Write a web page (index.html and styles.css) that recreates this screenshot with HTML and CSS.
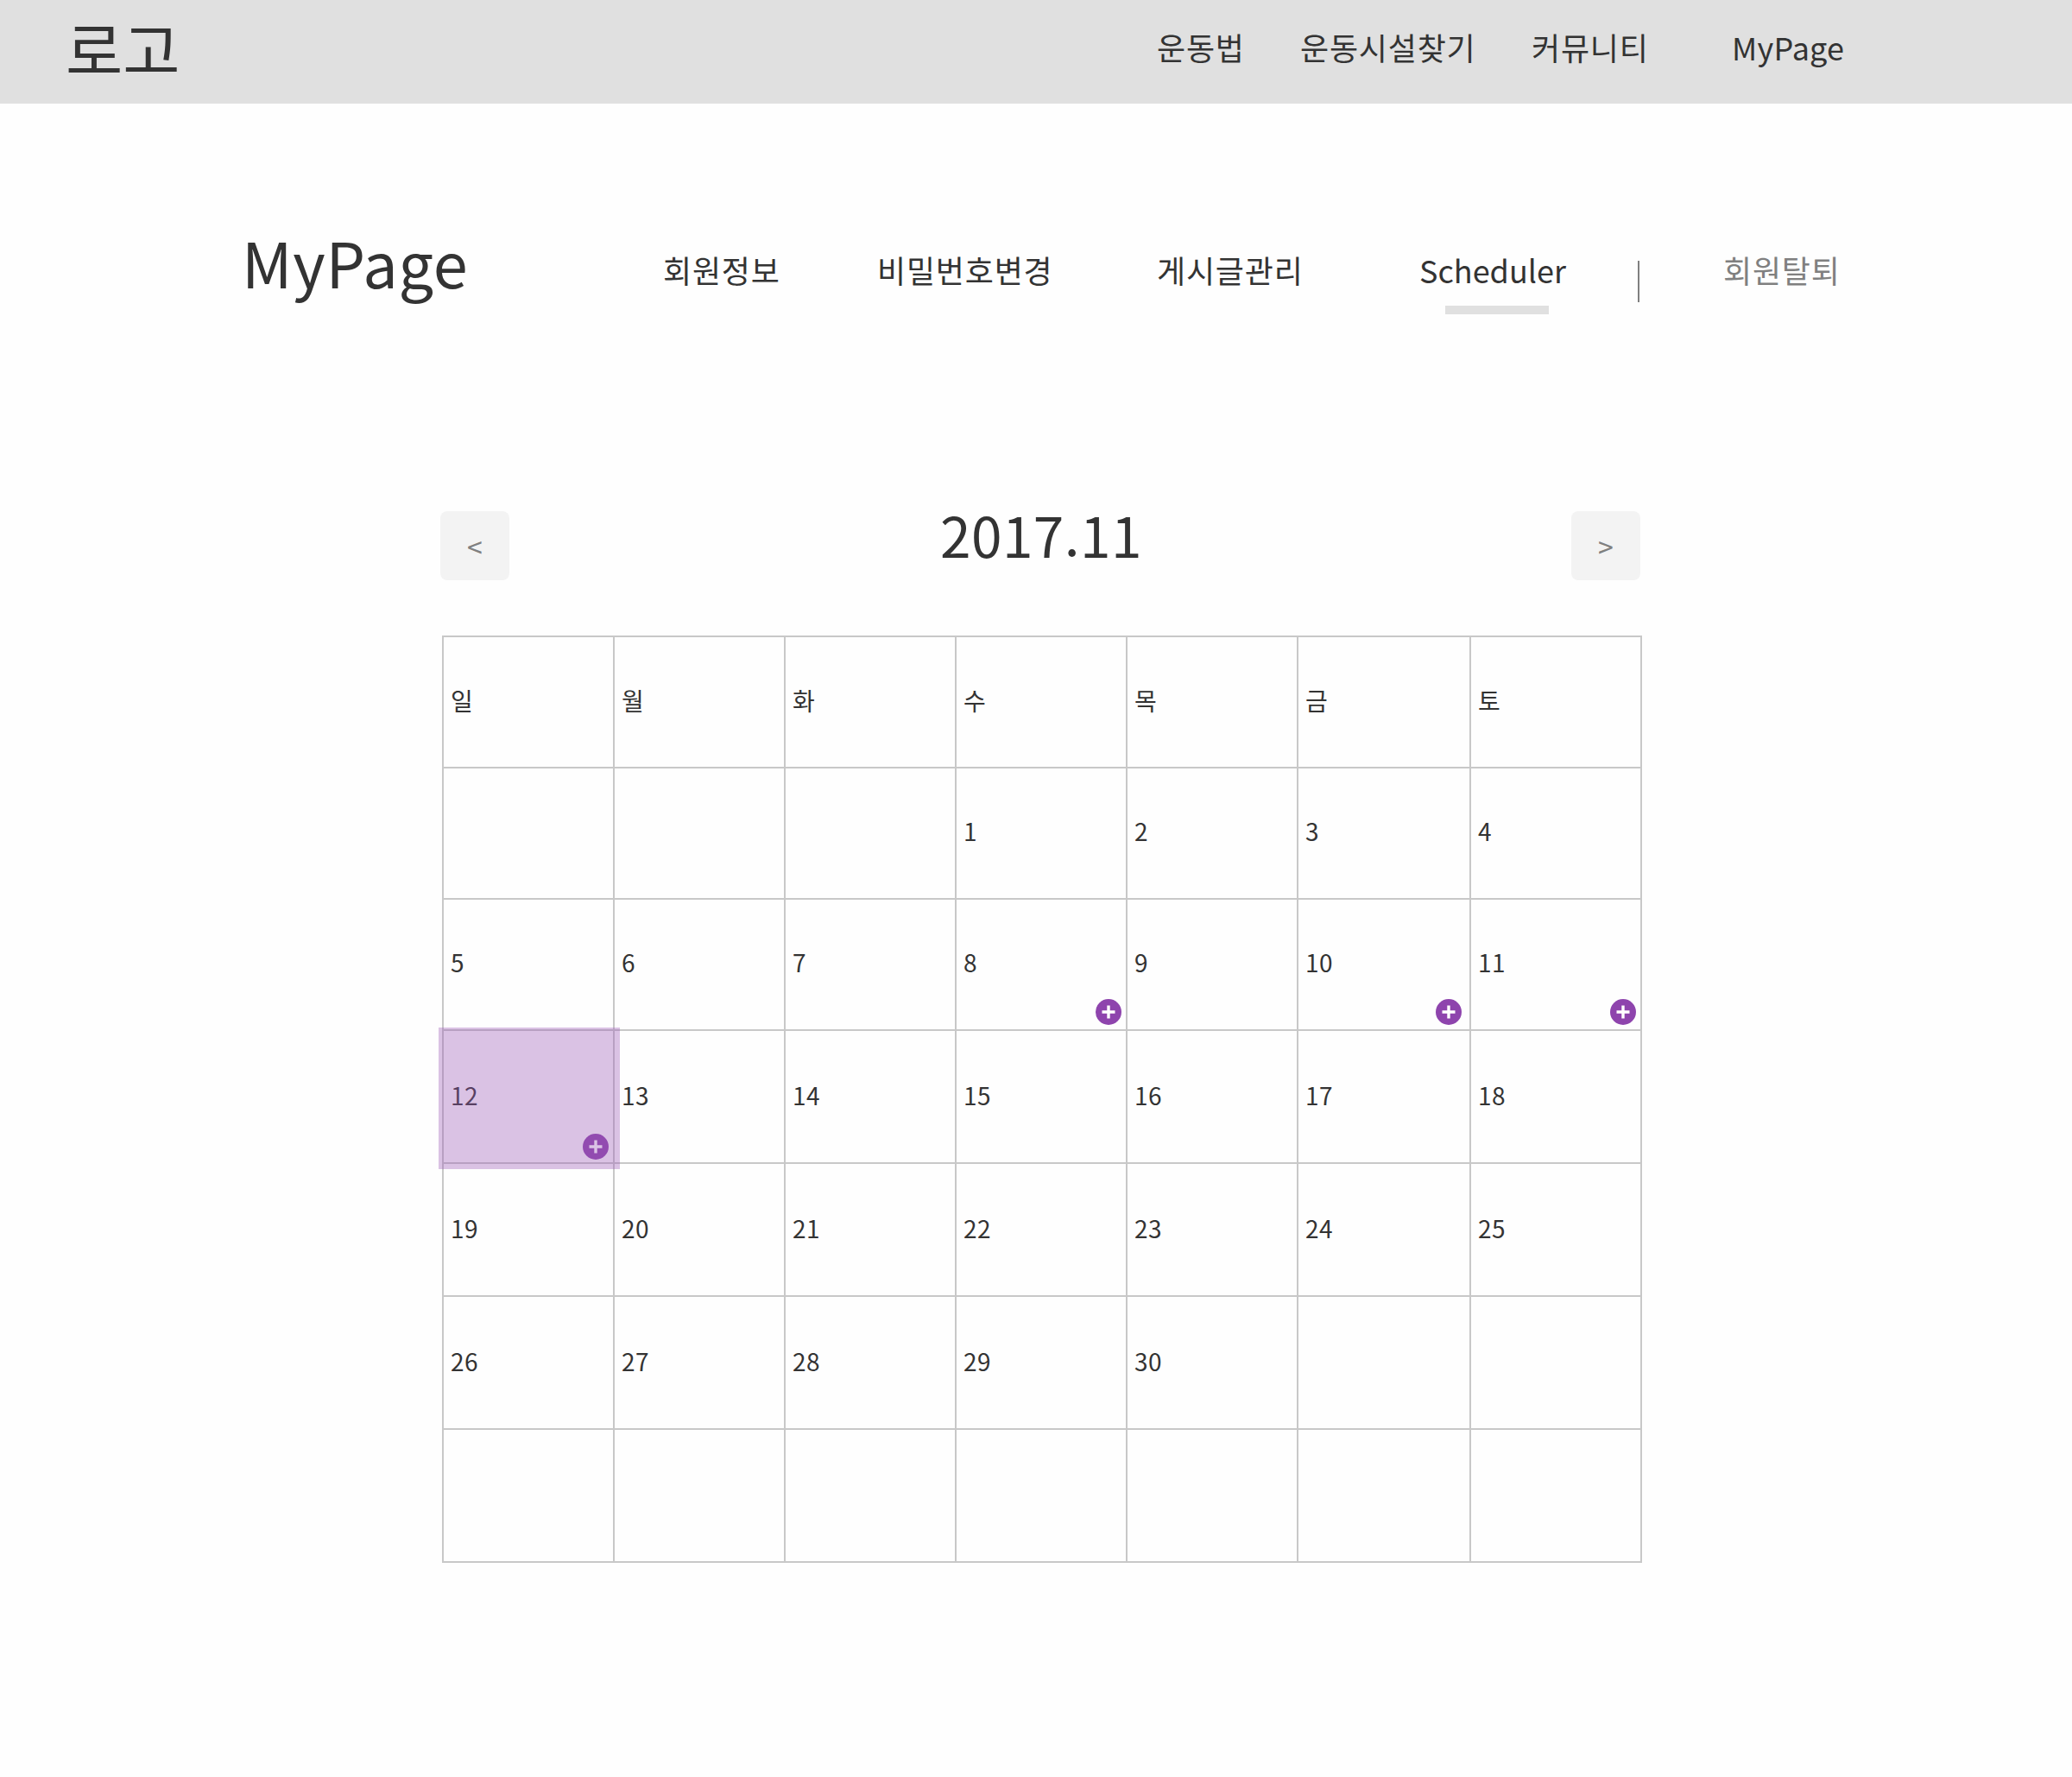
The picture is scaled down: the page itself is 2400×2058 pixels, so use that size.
FILE: index.html
```html
<!DOCTYPE html>
<html lang="ko">
<head>
<meta charset="utf-8">
<title>MyPage - Scheduler</title>
<link rel="stylesheet" href="styles.css">
</head>
<body>
<header class="topbar">
  <a class="logo">로고</a>
  <nav class="topnav"><a>운동법</a><a>운동시설찾기</a><a>커뮤니티</a><a class="latin">MyPage</a></nav>
</header>
<section class="subhead">
  <h1 class="title">MyPage</h1>
  <nav class="subnav">
    <a>회원정보</a><a>비밀번호변경</a><a>게시글관리</a><a class="active">Scheduler</a>
    <span class="divider"></span><a class="leave">회원탈퇴</a>
  </nav>
</section>
<main class="scheduler">
  <div class="monthbar">
    <button class="step">&lt;</button>
    <h2 class="month">2017.11</h2>
    <button class="step">&gt;</button>
  </div>
  <div class="calendar">
    <div class="day name">일</div><div class="day name">월</div><div class="day name">화</div><div class="day name">수</div><div class="day name">목</div><div class="day name">금</div><div class="day name">토</div>
    <div class="day"></div><div class="day"></div><div class="day"></div><div class="day">1</div><div class="day">2</div><div class="day">3</div><div class="day">4</div>
    <div class="day">5</div><div class="day">6</div><div class="day">7</div>
    <div class="day">8<svg class="add" viewBox="0 0 30 30"><circle cx="15" cy="15" r="15"/><path d="M7.5 15h15M15 7.5v15"/></svg></div>
    <div class="day">9</div>
    <div class="day">10<svg class="add inset" viewBox="0 0 30 30"><circle cx="15" cy="15" r="15"/><path d="M7.5 15h15M15 7.5v15"/></svg></div>
    <div class="day">11<svg class="add" viewBox="0 0 30 30"><circle cx="15" cy="15" r="15"/><path d="M7.5 15h15M15 7.5v15"/></svg></div>
    <div class="day selected">12<svg class="add" viewBox="0 0 30 30"><circle cx="15" cy="15" r="15"/><path d="M7.5 15h15M15 7.5v15"/></svg></div>
    <div class="day">13</div><div class="day">14</div><div class="day">15</div><div class="day">16</div><div class="day">17</div><div class="day">18</div>
    <div class="day">19</div><div class="day">20</div><div class="day">21</div><div class="day">22</div><div class="day">23</div><div class="day">24</div><div class="day">25</div>
    <div class="day">26</div><div class="day">27</div><div class="day">28</div><div class="day">29</div><div class="day">30</div><div class="day"></div><div class="day"></div>
    <div class="day"></div><div class="day"></div><div class="day"></div><div class="day"></div><div class="day"></div><div class="day"></div><div class="day"></div>
  </div>
</main>
</body>
</html>
```
FILE: styles.css
```css
* { box-sizing: border-box; }
body {
  margin: 0;
  min-height: 2058px;
  background: #fefefe;
  color: #333;
  font-family: "Noto Sans CJK KR", "Noto Sans", sans-serif;
}
h1, h2 { margin: 0; font-weight: 400; }
a { white-space: nowrap; }

.topbar {
  display: flex;
  height: 120px;
  padding-left: 76px;
  background: #e0e0e0;
}
.logo { width: 1264px; font-size: 72px; line-height: 110px; }
.topnav {
  display: grid;
  grid-template-columns: 166px 268px 232px auto;
  font-size: 36px;
  line-height: 108px;
  letter-spacing: 0.8px;
}
.topnav .latin { letter-spacing: 0.2px; }

.subhead {
  display: flex;
  height: 280px;
  padding: 132px 0 0 280px;
}
.title {
  width: 488px;
  font-size: 72px;
  line-height: 102px;
  letter-spacing: 0.7px;
}
.subnav {
  display: grid;
  grid-template-columns: 248px 324px 304px 253px 99px auto;
  height: 118px;
  padding-top: 34px;
  font-size: 36px;
  line-height: 52px;
  letter-spacing: 0.8px;
}
.active { letter-spacing: 0; }
.active::after {
  content: "";
  display: block;
  width: 120px;
  height: 10px;
  margin: 16px 0 0 30px;
  background: #e0e0e0;
}
.divider { width: 2px; height: 48px; margin-top: 16px; background: #808080; }
.leave { color: #808080; }

.scheduler { width: 1392px; margin: 192px 0 0 510px; }
.monthbar {
  display: flex;
  justify-content: space-between;
  width: 1390px;
  height: 144px;
}
.step {
  width: 80px;
  height: 80px;
  padding: 0;
  border: 0;
  border-radius: 8px;
  background: #f3f3f3;
  color: #808080;
  font: 32px/80px "Noto Sans CJK KR", sans-serif;
}
.month { padding-left: 2px; font-size: 64px; line-height: 53px; letter-spacing: 0.4px; }

.calendar {
  display: grid;
  grid-template-columns: repeat(5, 198px) 200px 198px;
  grid-template-rows: repeat(3, 152px) repeat(4, 154px);
  width: 1390px;
  margin-left: 2px;
  border: solid #c8c8c8;
  border-width: 0 2px 2px 0;
}
.day {
  position: relative;
  display: flex;
  align-items: center;
  padding: 0 0 6px 8px;
  border: solid #c8c8c8;
  border-width: 2px 0 0 2px;
  font-size: 28px;
  letter-spacing: 0.5px;
}
.day:nth-child(n + 22) { padding-bottom: 4px; }
.name { padding-bottom: 5px; }
.add { position: absolute; right: 5px; bottom: 5px; width: 30px; height: 30px; }
.add circle { fill: #8e44ad; }
.add path { fill: none; stroke: #fff; stroke-width: 3.4; }
.inset { right: 9px; }
.selected .add { bottom: 3px; }
.selected::after {
  content: "";
  position: absolute;
  z-index: 1;
  top: -4px;
  left: -6px;
  width: 210px;
  height: 164px;
  background: rgba(155, 89, 182, 0.36);
}
```
